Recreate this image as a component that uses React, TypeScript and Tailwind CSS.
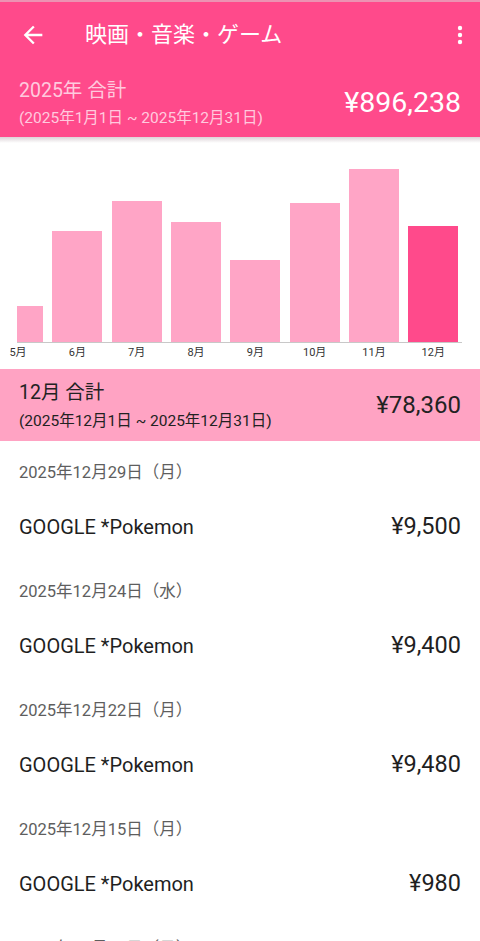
const months = [
  { label: '5月', h: 36, partial: true },
  { label: '6月', h: 111 },
  { label: '7月', h: 141 },
  { label: '8月', h: 120 },
  { label: '9月', h: 82 },
  { label: '10月', h: 139 },
  { label: '11月', h: 173 },
  { label: '12月', h: 116, active: true },
];

const entries = [
  { date: '2025年12月29日（月）', name: 'GOOGLE *Pokemon', amount: '¥9,500' },
  { date: '2025年12月24日（水）', name: 'GOOGLE *Pokemon', amount: '¥9,400' },
  { date: '2025年12月22日（月）', name: 'GOOGLE *Pokemon', amount: '¥9,480' },
  { date: '2025年12月15日（月）', name: 'GOOGLE *Pokemon', amount: '¥980' },
  { date: '2025年12月14日（日）' },
];

const App = () => {
  return (
    <div
      className="w-[480px] h-[941px] overflow-hidden bg-white"
      style={{ fontFamily: "Roboto, 'Noto Sans CJK JP', sans-serif" }}
    >
      {/* header */}
      <div className="bg-[#ff4a8b] border-t-2 border-[#ec93b3]">
        <div className="h-[66px] flex items-center pl-[19px] pr-[14px]">
          <svg width="28" height="28" viewBox="0 0 24 24" fill="white">
            <path d="M20 11H7.83l5.59-5.59L12 4l-8 8 8 8 1.41-1.41L7.83 13H20v-2z" />
          </svg>
          <div className="ml-[38px] text-white text-[22px] leading-[28px] flex-1">映画・音楽・ゲーム</div>
          <svg width="12" height="24" viewBox="0 0 12 24" fill="white">
            <circle cx="6" cy="5" r="2.2" />
            <circle cx="6" cy="12" r="2.2" />
            <circle cx="6" cy="19" r="2.2" />
          </svg>
        </div>
        <div className="h-[69px] flex items-center justify-between px-[19px]">
          <div className="flex flex-col gap-[4px] text-[#ffcade]">
            <div className="text-[19.5px] leading-[26px]">2025年 合計</div>
            <div className="text-[15.5px] leading-[20px]">(2025年1月1日 ~ 2025年12月31日)</div>
          </div>
          <div className="text-white text-[28.5px] leading-[34px]">¥896,238</div>
        </div>
      </div>
      <div className="h-[6px] bg-gradient-to-b from-[#ddd3d7] to-white" />

      {/* chart */}
      <div className="pb-[9px]">
        <div className="h-[199px] flex items-end gap-[9.33px] ml-[-7px]">
          {months.map((m) => (
            <div key={m.label} className="w-[50px] flex justify-end">
              <div
                className={m.active ? 'bg-[#ff4a8b]' : 'bg-[#ffa5c6]'}
                style={{ height: m.h, width: m.partial ? 26 : 50 }}
              />
            </div>
          ))}
        </div>
        <div className="ml-[17px] w-[445px] h-px bg-[#c8c8c8]" />
        <div className="mt-[3px] flex gap-[9.33px] ml-[-7px]">
          {months.map((m) => (
            <div key={m.label} className="w-[50px] text-center text-[11px] leading-[14px] text-[#333]">
              {m.label}
            </div>
          ))}
        </div>
      </div>

      {/* month summary */}
      <div className="h-[72px] bg-[#ffa3c3] flex items-center justify-between px-[19px] text-[#222]">
        <div className="flex flex-col gap-[5px]">
          <div className="text-[19.5px] leading-[26px]">12月 合計</div>
          <div className="text-[15.5px] leading-[20px]">(2025年12月1日 ~ 2025年12月31日)</div>
        </div>
        <div className="text-[24px] leading-[30px]">¥78,360</div>
      </div>

      {/* list */}
      <div>
        {entries.map((e, i) => (
          <div key={i} className="px-[19px] pb-[13px]">
            <div className="h-[24px] mt-[20px] flex items-center text-[16.5px] text-[#5e5e5e]">{e.date}</div>
            {e.name && (
              <div className="h-[40px] mt-[22px] flex items-center justify-between text-[#1f1f1f]">
                <div className="text-[20px]">{e.name}</div>
                <div className="text-[23.5px]">{e.amount}</div>
              </div>
            )}
          </div>
        ))}
      </div>
    </div>
  );
};

export default App;
